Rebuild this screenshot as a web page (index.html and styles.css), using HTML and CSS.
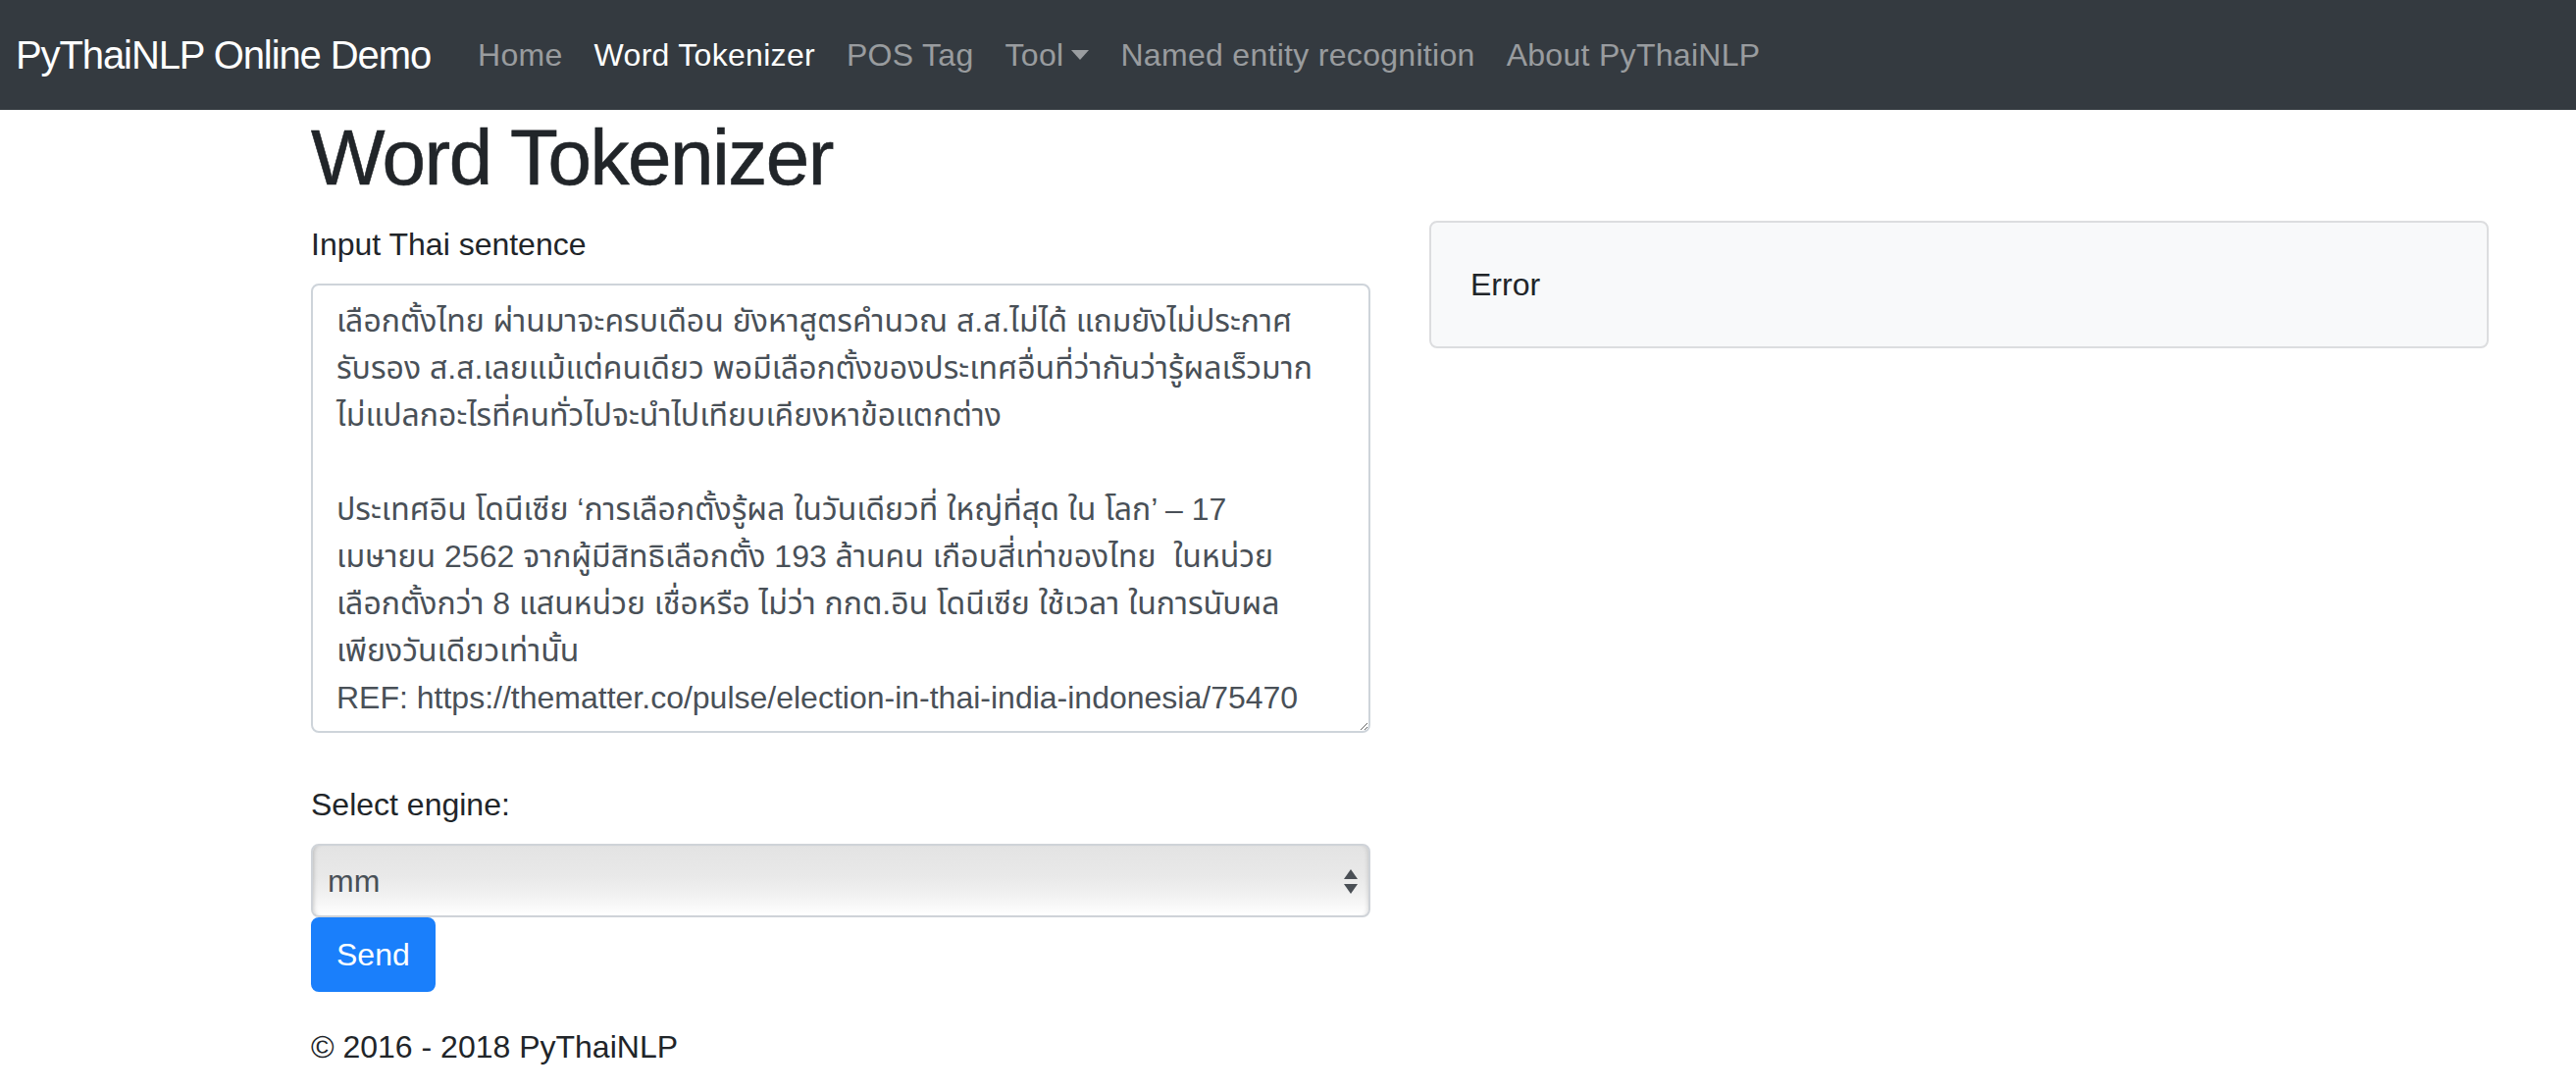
FILE: index.html
```html
<!DOCTYPE html>
<html lang="th">
<head>
  <meta charset="UTF-8" />
  <meta name="viewport" content="width=device-width, initial-scale=1.0"/>
  <title>Word Tokenizer - PyThaiNLP Online Demo</title>
  <link rel="stylesheet" href="styles.css">
</head>
<body>

  <!-- Barra de navegação -->
  <nav class="navbar">
    <a class="navbar-brand" href="#">PyThaiNLP Online Demo</a>
    <ul class="navbar-nav">
      <li><a class="nav-link" href="#">Home</a></li>
      <li><a class="nav-link active" href="#">Word Tokenizer</a></li>
      <li><a class="nav-link" href="#">POS Tag</a></li>
      <li><a class="nav-link dropdown-toggle" href="#">Tool</a></li>
      <li><a class="nav-link" href="#">Named entity recognition</a></li>
      <li><a class="nav-link" href="#">About PyThaiNLP</a></li>
    </ul>
  </nav>

  <main class="container">
    <h1 class="page-title">Word Tokenizer</h1>

    <div class="row">
      <div class="col">
        <form>
          <div class="form-group first">
            <label for="text">Input Thai sentence</label>
            <textarea id="text" class="form-control text-input">เลือกตั้งไทย ผ่านมาจะครบเดือน ยังหาสูตรคำนวณ ส.ส.ไม่ได้ แถมยังไม่ประกาศ
รับรอง ส.ส.เลยแม้แต่คนเดียว พอมีเลือกตั้งของประเทศอื่นที่ว่ากันว่ารู้ผลเร็วมาก
ไม่แปลกอะไรที่คนทั่วไปจะนำไปเทียบเคียงหาข้อแตกต่าง

ประเทศอิน โดนีเซีย ‘การเลือกตั้งรู้ผล ในวันเดียวที่ ใหญ่ที่สุด ใน โลก’ – 17
เมษายน 2562 จากผู้มีสิทธิเลือกตั้ง 193 ล้านคน เกือบสี่เท่าของไทย  ในหน่วย
เลือกตั้งกว่า 8 แสนหน่วย เชื่อหรือ ไม่ว่า กกต.อิน โดนีเซีย ใช้เวลา ในการนับผล
เพียงวันเดียวเท่านั้น
REF: https://thematter.co/pulse/election-in-thai-india-indonesia/75470</textarea>
          </div>

          <div class="form-group">
            <label for="engine">Select engine:</label>
            <div class="select-wrap">
              <select id="engine" class="engine-select">
                <option>mm</option>
                <option>newmm</option>
                <option>longest</option>
              </select>
              <!-- setas do select -->
              <svg class="select-arrows" width="14" height="26" viewBox="0 0 14 26">
                <path d="M7 0 L14 10 L0 10 Z" fill="#4a4f55"/>
                <path d="M0 15 L14 15 L7 25 Z" fill="#4a4f55"/>
              </svg>
            </div>
            <button type="button" class="btn-send">Send</button>
          </div>
        </form>

        <footer class="footer">
          <p>&copy; 2016 - 2018 PyThaiNLP</p>
        </footer>
      </div>

      <div class="col">
        <div class="result-card">Error</div>
      </div>
    </div>
  </main>

</body>
</html>
```

FILE: styles.css
```css
/* ----------------------
   PyThaiNLP demo
   ---------------------- */

* {
  box-sizing: border-box;
}
body {
  margin: 0;
  font-family: "Liberation Sans", Arial, "Noto Sans Thai", "Noto Sans", sans-serif;
  font-size: 32px;
  line-height: 1.5;
  color: #212529;
  background-color: #fff;
}

/* Navbar */
.navbar {
  display: flex;
  align-items: center;
  height: 112px;
  padding: 0 16px;
  background-color: #343a40;
}
.navbar-brand {
  font-size: 40px;
  line-height: 60px;
  letter-spacing: -1.1px;
  color: #fff;
  text-decoration: none;
  margin-right: 32px;
}
.navbar-nav {
  display: flex;
  list-style: none;
  margin: 0;
  padding: 0;
}
.nav-link {
  display: block;
  padding: 16px;
  line-height: 48px;
  letter-spacing: 0.3px;
  color: rgba(255, 255, 255, 0.5);
  text-decoration: none;
}
.nav-link.active {
  color: #fff;
}
.dropdown-toggle::after {
  content: "";
  display: inline-block;
  margin-left: 8px;
  vertical-align: 6px;
  border-top: 10px solid;
  border-left: 9px solid transparent;
  border-right: 9px solid transparent;
}

/* Conteúdo */
.container {
  width: 2280px;
  margin-left: 287px;
  padding: 1px 30px 0;
}
.page-title {
  font-size: 80px;
  font-weight: 400;
  line-height: 96px;
  letter-spacing: -1.5px;
  -webkit-text-stroke: 0.6px #212529;
  margin: 0 0 16px;
}
.row {
  display: flex;
  margin: 0 -30px;
}
.col {
  flex: 0 0 50%;
  padding: 0 30px;
}

label {
  display: block;
  margin-bottom: 16px;
}
.form-group.first {
  margin-bottom: 49px;
}
.form-control {
  display: block;
  width: 100%;
  font: inherit;
  color: #495057;
  background-color: #fff;
  border: 2px solid #ced4da;
  border-radius: 8px;
}
.text-input {
  height: 458px;
  padding: 12px 24px;
  line-height: 48px;
  overflow: hidden;
  resize: vertical;
}

/* Select com o visual nativo */
.select-wrap {
  position: relative;
}
.engine-select {
  display: block;
  width: 100%;
  height: 75px;
  padding: 0 60px 0 15px;
  font: inherit;
  color: #495057;
  border: 2px solid #cfd3d8;
  border-radius: 8px;
  appearance: none;
  -webkit-appearance: none;
  background: linear-gradient(#e3e3e3 0%, #e9e9e9 45%, #f1f1f1 70%, #fbfbfb 92%, #fff 100%);
  box-shadow: inset 4px 0 4px -3px rgba(0, 0, 0, 0.18), inset -4px 0 4px -3px rgba(0, 0, 0, 0.12);
}
.select-arrows {
  position: absolute;
  right: 13px;
  top: 26px;
  pointer-events: none;
}

.btn-send {
  display: block;
  padding: 12px 24px;
  font: inherit;
  line-height: 48px;
  color: #fff;
  background-color: #1a7ffb;
  border: 2px solid #1a7ffb;
  border-radius: 8px;
  cursor: pointer;
}

.footer {
  margin-top: 32px;
}
.footer p {
  margin: 0;
}

/* Caixa de resultado */
.result-card {
  padding: 39px 40px;
  background-color: #f8f9fa;
  border: 2px solid #dcdddf;
  border-radius: 8px;
}
```
